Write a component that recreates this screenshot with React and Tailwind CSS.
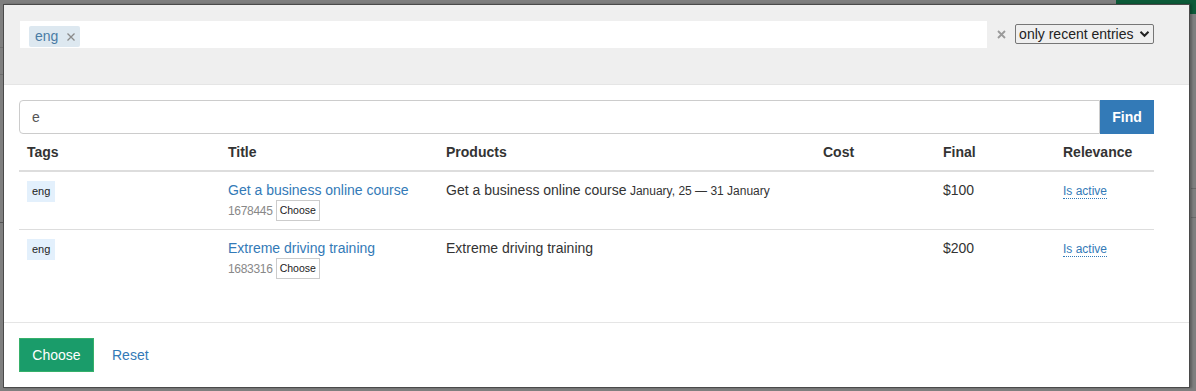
import React from 'react'

const rows = [
    { id: 1678445, title: 'Get a business online course', dates: 'January, 25 — 31 January', final: '$100' },
    { id: 1683316, title: 'Extreme driving training', dates: null, final: '$200' },
]

function Chevron() {
    return (
        <svg width="11" height="8" viewBox="0 0 11 8" className="ml-[5px]">
            <path d="M1.5 1.8 L5.5 5.8 L9.5 1.8" fill="none" stroke="#222" strokeWidth="2" />
        </svg>
    )
}

function TagFilter() {
    return (
        <div className="h-[80px] bg-[#efefef] border-b border-[#e5e5e5] pt-[16px] pl-[16px] pr-[35px] flex items-start">
            <div className="w-[968px] h-[27px] bg-white pl-[9px] pt-[3px]">
                <span className="inline-flex items-center h-[21px] bg-[#dde8f0] rounded-[2px] pl-[6px] pr-[5px] text-[14px] text-[#4a7ca5]">
                    eng
                    <svg width="8" height="8" viewBox="0 0 8 8" className="ml-[9px]">
                        <path d="M0.5 0.5 L7.5 7.5 M7.5 0.5 L0.5 7.5" stroke="#8a8a8a" strokeWidth="1.3" />
                    </svg>
                </span>
            </div>
            <div className="w-[28px] h-[27px] flex items-center justify-center">
                <svg width="9" height="9" viewBox="0 0 9 9">
                    <path d="M1 1 L8 8 M8 1 L1 8" stroke="#9a9a9a" strokeWidth="1.8" />
                </svg>
            </div>
            <div className="mt-[3px] w-[139px] h-[20px] border border-[#767676] rounded-[2px] flex items-center pl-[3px] text-[14px] text-[#222]">
                only recent entries
                <Chevron />
            </div>
        </div>
    )
}

function ResultsTable() {
    return (
        <table className="w-[1135px] table-fixed border-collapse text-[14px] text-[#333]">
            <thead>
                <tr className="border-b-2 border-[#ddd]">
                    <th className="w-[201px] p-[8px] leading-[20px] text-left font-bold">Tags</th>
                    <th className="w-[218px] p-[8px] leading-[20px] text-left font-bold">Title</th>
                    <th className="w-[377px] p-[8px] leading-[20px] text-left font-bold">Products</th>
                    <th className="w-[120px] p-[8px] leading-[20px] text-left font-bold">Cost</th>
                    <th className="w-[120px] p-[8px] leading-[20px] text-left font-bold">Final</th>
                    <th className="w-[99px] p-[8px] leading-[20px] text-left font-bold">Relevance</th>
                </tr>
            </thead>
            <tbody>
                {rows.map((row, i) => (
                    <tr key={row.id} className={i > 0 ? 'border-t border-[#ddd]' : ''}>
                        <td className="p-[8px] align-top">
                            <span className="inline-flex items-center h-[21px] px-[5px] bg-[#e3f0fc] text-[11px] text-[#222]">eng</span>
                        </td>
                        <td className="p-[8px] align-top">
                            <a className="block leading-[20px] text-[#337ab7]">{row.title}</a>
                            <div className="flex items-center h-[21px] text-[12px] text-[#888] tracking-[-0.3px]">
                                {row.id}
                                <span className="ml-[3px] h-[21px] px-[3px] border border-[#ccc] text-[10.5px] text-[#222] tracking-normal flex items-center">Choose</span>
                            </div>
                        </td>
                        <td className="p-[8px] align-top leading-[20px]">
                            {row.title}
                            {row.dates && <span className="text-[12px]"> {row.dates}</span>}
                        </td>
                        <td className="p-[8px] align-top"></td>
                        <td className="p-[8px] align-top leading-[20px]">{row.final}</td>
                        <td className="p-[8px] align-top leading-[20px]">
                            <a className="text-[12px] text-[#337ab7] border-b border-dotted border-[#337ab7]">Is active</a>
                        </td>
                    </tr>
                ))}
            </tbody>
        </table>
    )
}

export default function App() {
    return (
        <div className="relative w-[1196px] h-[391px] bg-[#7f7f7f] overflow-hidden" style={{ fontFamily: '"Liberation Sans", Arial, sans-serif' }}>
            {/* dimmed page behind the dialog */}
            <div className="absolute left-[1116px] top-0 w-[80px] h-[14px] bg-[#0c5a38]"></div>
            <div className="absolute left-0 top-[47px] w-[4px] h-px bg-[#6e6e6e]"></div>
            <div className="absolute left-0 top-[74px] w-[4px] h-px bg-[#6e6e6e]"></div>
            <div className="absolute left-0 top-[222px] w-[4px] h-px bg-[#555]"></div>
            <div className="absolute left-[1191px] top-[188px] w-[5px] h-px bg-[#6a6a6a]"></div>
            <div className="absolute left-[1191px] top-[217px] w-[5px] h-px bg-[#6a6a6a]"></div>

            <div className="absolute left-[3px] top-[4px] w-[1187px] h-[384px] bg-white border border-[#4a4a4a] shadow-[2px_0_2px_rgba(0,0,0,0.25)] flex flex-col">
                <TagFilter />

                <div className="pt-[15px] pl-[15px] pr-[35px] pb-[15px]">
                    <div className="flex h-[34px]">
                        <div className="flex-1 border border-[#ccc] rounded-l-[4px] pl-[12px] flex items-center text-[14px] text-[#555]">e</div>
                        <button className="w-[54px] bg-[#337ab7] text-white text-[14px] font-bold">Find</button>
                    </div>
                    <ResultsTable />
                    <div className="h-[20px]"></div>
                </div>

                <div className="border-t border-[#e5e5e5] flex-1 pl-[15px] pt-[15px] flex items-start">
                    <button className="h-[34px] w-[75px] bg-[#1a9c6a] border border-[#36b06a] text-white text-[14px]">Choose</button>
                    <a className="ml-[18px] h-[34px] flex items-center text-[14px] text-[#337ab7]">Reset</a>
                </div>
            </div>
        </div>
    )
}
